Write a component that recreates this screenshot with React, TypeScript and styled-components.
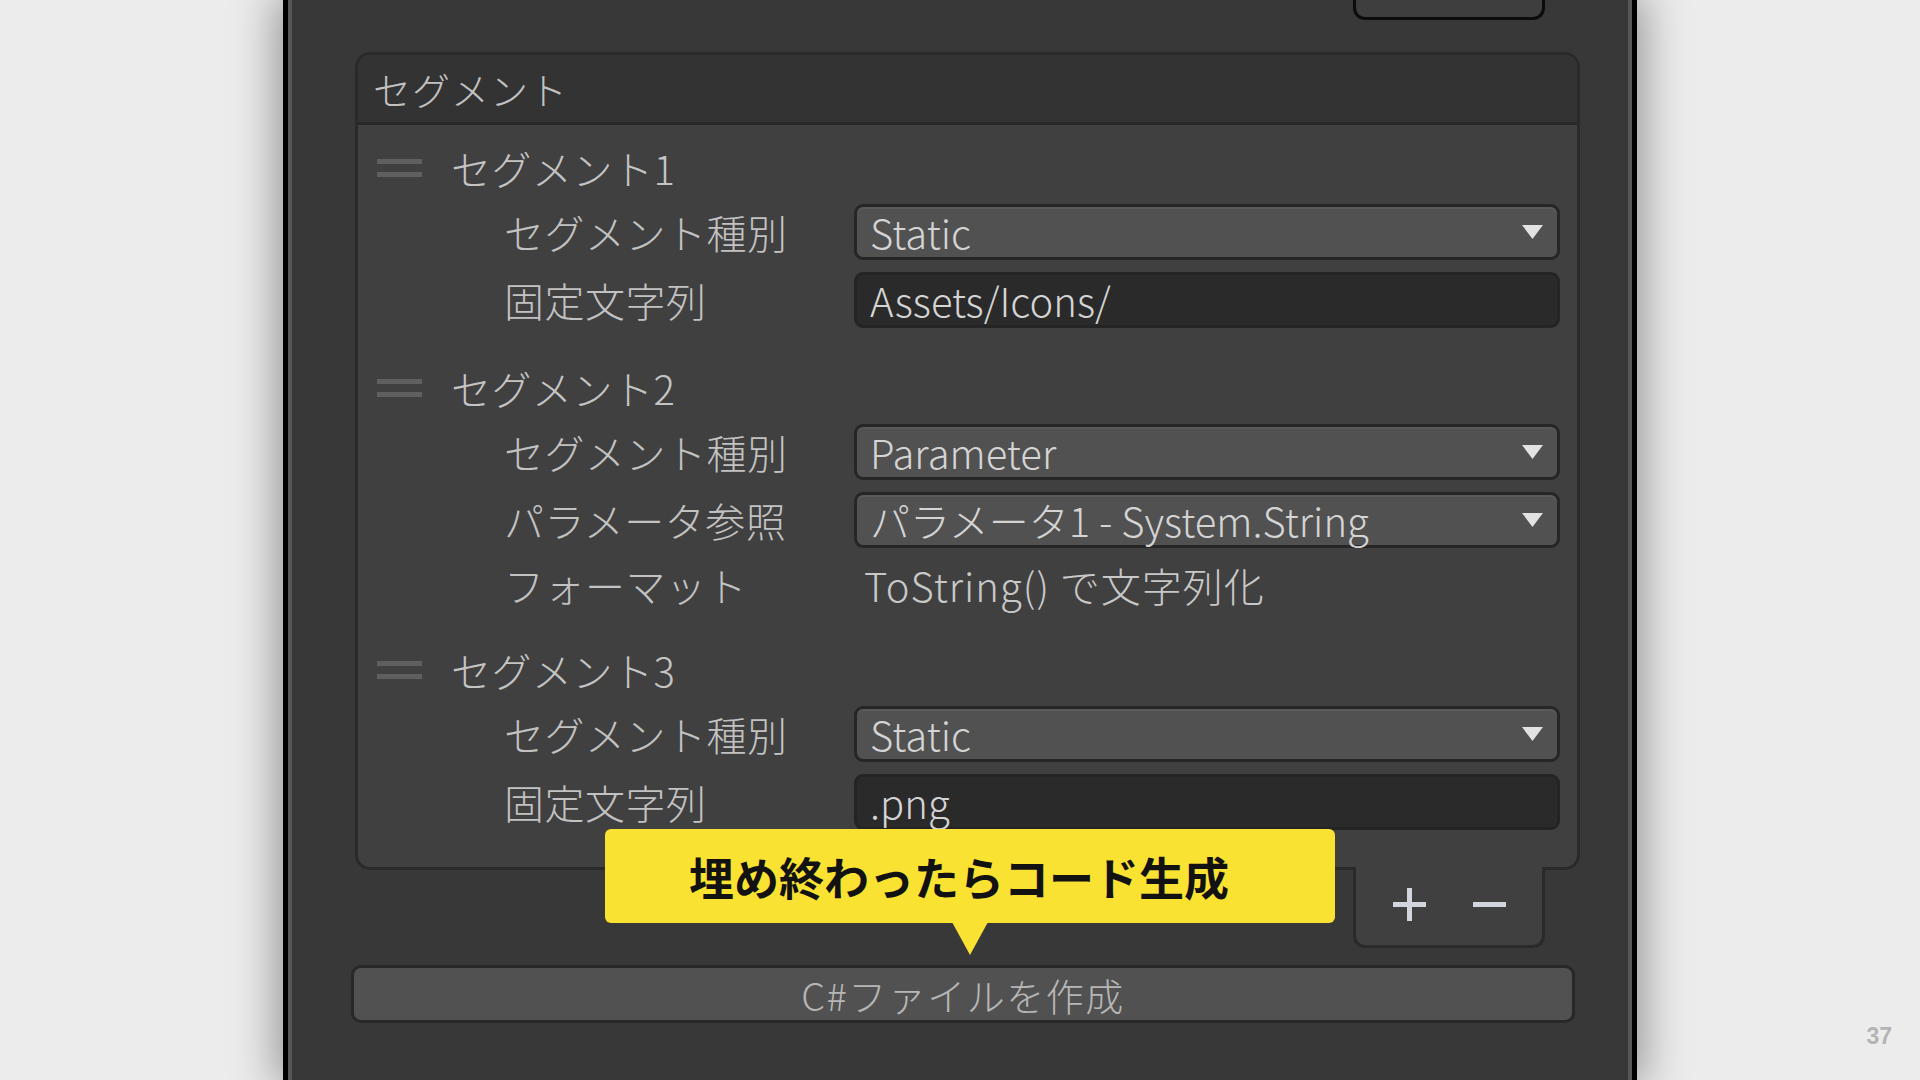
import React from 'react';
import styled, { createGlobalStyle } from 'styled-components';

const GlobalStyle = createGlobalStyle`
  html, body {
    margin: 0;
    padding: 0;
    background: #ececec;
    overflow: hidden;
  }
  body {
    font-family: "Noto Sans CJK JP", "Noto Sans", sans-serif;
    font-weight: 300;
  }
`;

interface IField {
  label: string;
  kind: 'select' | 'input' | 'text';
  value: string;
}

interface ISegment {
  title: string;
  fields: IField[];
}

const segments: ISegment[] = [
  {
    title: 'セグメント1',
    fields: [
      { label: 'セグメント種別', kind: 'select', value: 'Static' },
      { label: '固定文字列', kind: 'input', value: 'Assets/Icons/' },
    ],
  },
  {
    title: 'セグメント2',
    fields: [
      { label: 'セグメント種別', kind: 'select', value: 'Parameter' },
      { label: 'パラメータ参照', kind: 'select', value: 'パラメータ1 - System.String' },
      { label: 'フォーマット', kind: 'text', value: 'ToString() で文字列化' },
    ],
  },
  {
    title: 'セグメント3',
    fields: [
      { label: 'セグメント種別', kind: 'select', value: 'Static' },
      { label: '固定文字列', kind: 'input', value: '.png' },
    ],
  },
];

const Arrow = () => (
  <svg width="21" height="14" viewBox="0 0 21 14">
    <polygon points="0,0 21,0 10.5,14" fill="#e2e2e2" />
  </svg>
);

const PlusIcon = () => (
  <svg width="33" height="33" viewBox="0 0 33 33">
    <path d="M16.5 0 V33 M0 16.5 H33" stroke="#d2d4de" strokeWidth="5" />
  </svg>
);

const MinusIcon = () => (
  <svg width="33" height="33" viewBox="0 0 33 33">
    <path d="M0 16.5 H33" stroke="#d2d4de" strokeWidth="5" />
  </svg>
);

const App: React.FC = () => {
  return (
    <>
      <GlobalStyle />
      <Page>
        <Window>
          <Content>
            <TopRow>
              <TopButton />
            </TopRow>
            <Section>
              <SectionHeader>セグメント</SectionHeader>
              <SectionBody>
                {segments.map((seg) => (
                  <Segment key={seg.title}>
                    <SegmentHead>
                      <Handle>
                        <span />
                        <span />
                      </Handle>
                      <SegmentTitle>{seg.title}</SegmentTitle>
                    </SegmentHead>
                    {seg.fields.map((f) => (
                      <FieldRow key={f.label} short={f.kind === 'text'}>
                        <Label>{f.label}</Label>
                        {f.kind === 'select' && (
                          <Select>
                            <span>{f.value}</span>
                            <Arrow />
                          </Select>
                        )}
                        {f.kind === 'input' && <Input>{f.value}</Input>}
                        {f.kind === 'text' && <Plain>{f.value}</Plain>}
                      </FieldRow>
                    ))}
                  </Segment>
                ))}
              </SectionBody>
            </Section>
            <FooterRow>
              <Footer>
                <PlusIcon />
                <MinusIcon />
              </Footer>
            </FooterRow>
            <CreateButton>C#ファイルを作成</CreateButton>
            <Callout>埋め終わったらコード生成</Callout>
          </Content>
        </Window>
        <PageNumber>37</PageNumber>
      </Page>
    </>
  );
};

export default App;

const Page = styled.div`
  position: relative;
  width: 1920px;
  height: 1080px;
  display: flex;
  justify-content: center;
  overflow: hidden;
  background: #ececec;
`;

const Window = styled.div`
  box-sizing: border-box;
  width: 1354px;
  height: 1080px;
  background: #383838;
  border-left: 5px solid #000;
  border-right: 5px solid #000;
  box-shadow: 0 0 42px 6px rgba(0, 0, 0, 0.38), inset 4px 0 0 #575757,
    inset -4px 0 0 #575757;
  padding: 0 52px 0 67px;
`;

const Content = styled.div`
  position: relative;
  display: flex;
  flex-direction: column;
`;

const TopRow = styled.div`
  display: flex;
  justify-content: flex-end;
  padding-right: 35px;
`;

const TopButton = styled.div`
  box-sizing: border-box;
  width: 192px;
  height: 20px;
  background: #3e3e3e;
  border: 3px solid #0c0c0c;
  border-top: none;
  border-radius: 0 0 12px 12px;
`;

const Section = styled.div`
  position: relative;
  z-index: 1;
  margin-top: 32px;
  border: 3px solid #2a2a2a;
  border-radius: 15px;
  background: #404040;
  overflow: hidden;
`;

const SectionHeader = styled.div`
  height: 67px;
  display: flex;
  align-items: center;
  padding-left: 15px;
  background: #333333;
  border-bottom: 3px solid #282828;
  color: #c2c2c2;
  font-size: 38px;
  letter-spacing: 1px;
`;

const SectionBody = styled.div`
  display: flex;
  flex-direction: column;
  gap: 36px;
  padding: 19px 17px 37px 0;
`;

const Segment = styled.div`
  display: flex;
  flex-direction: column;
  gap: 12px;
`;

const SegmentHead = styled.div`
  height: 48px;
  display: flex;
  align-items: center;
  gap: 29px;
  padding-left: 19px;
`;

const Handle = styled.div`
  display: flex;
  flex-direction: column;
  gap: 8px;
  span {
    display: block;
    width: 45px;
    height: 5px;
    background: #5f5f5f;
  }
`;

const SegmentTitle = styled.div`
  color: #c4c4c4;
  font-size: 40px;
  letter-spacing: 0.5px;
`;

const FieldRow = styled.div<{ short?: boolean }>`
  height: ${(p) => (p.short ? '50px' : '56px')};
  display: flex;
  align-items: center;
  padding-left: 146px;
`;

const Label = styled.div`
  width: 350px;
  flex-shrink: 0;
  color: #c2c2c2;
  font-size: 40px;
  letter-spacing: 0.5px;
`;

const Select = styled.div`
  box-sizing: border-box;
  flex: 1;
  height: 56px;
  display: flex;
  align-items: center;
  justify-content: space-between;
  padding: 0 14px 0 13px;
  background: #515151;
  border: 3px solid #262626;
  border-radius: 9px;
  box-shadow: inset 0 2px 0 rgba(255, 255, 255, 0.05);
  color: #d4d4d4;
  font-size: 40px;
`;

const Input = styled.div`
  box-sizing: border-box;
  flex: 1;
  height: 56px;
  display: flex;
  align-items: center;
  padding-left: 13px;
  background: #2a2a2a;
  border: 3px solid #242424;
  border-radius: 9px;
  color: #d4d4d4;
  font-size: 40px;
`;

const Plain = styled.div`
  flex: 1;
  padding-left: 10px;
  color: #c8c8c8;
  font-size: 40px;
  letter-spacing: 1px;
  white-space: pre;
`;

const FooterRow = styled.div`
  display: flex;
  justify-content: flex-end;
  padding-right: 35px;
  margin-top: -3px;
  position: relative;
  z-index: 2;
`;

const Footer = styled.div`
  box-sizing: border-box;
  width: 192px;
  height: 81px;
  display: flex;
  align-items: center;
  justify-content: center;
  gap: 47px;
  padding-bottom: 3px;
  background: #404040;
  border: 3px solid #2a2a2a;
  border-top: none;
  border-radius: 0 0 12px 12px;
`;

const CreateButton = styled.div`
  box-sizing: border-box;
  margin: 17px 5px 0 -4px;
  height: 58px;
  display: flex;
  align-items: center;
  justify-content: center;
  background: #515151;
  border: 3px solid #282828;
  border-radius: 10px;
  color: #b6b6b6;
  font-size: 38px;
  letter-spacing: 1.5px;
`;

const Callout = styled.div`
  position: absolute;
  z-index: 3;
  left: 250px;
  top: 829px;
  box-sizing: border-box;
  width: 730px;
  height: 94px;
  display: flex;
  align-items: center;
  padding-left: 84px;
  background: #f9e232;
  border-radius: 6px;
  color: #121212;
  font-size: 45px;
  font-weight: 700;
  &::after {
    content: '';
    position: absolute;
    left: 347px;
    top: 93px;
    border-left: 18px solid transparent;
    border-right: 18px solid transparent;
    border-top: 33px solid #f9e232;
  }
`;

const PageNumber = styled.div`
  position: absolute;
  right: 28px;
  bottom: 30px;
  color: #b4b4b4;
  font-family: "Liberation Sans", sans-serif;
  font-weight: 700;
  font-size: 23px;
`;
